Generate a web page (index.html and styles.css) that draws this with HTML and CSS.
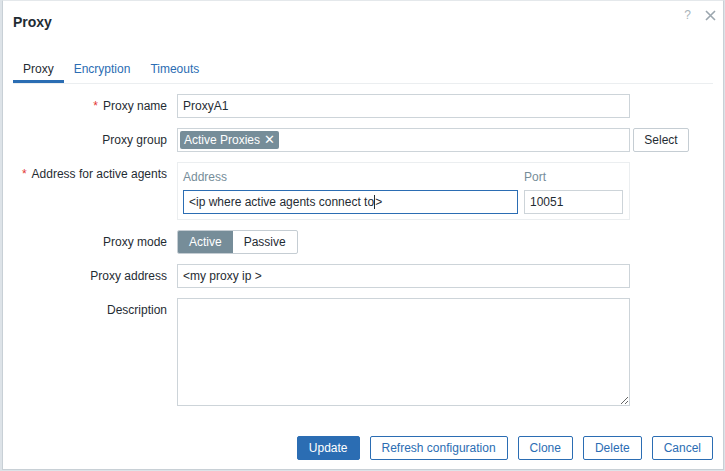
FILE: index.html
```html
<!DOCTYPE html>
<html lang="en">
<head>
  <meta charset="UTF-8">
  <meta name="viewport" content="width=device-width, initial-scale=1.0">
  <title>Proxy</title>
  <link rel="stylesheet" href="styles.css">
</head>
<body>
  <div class="dialog">
    <div class="dialog-header">
      <h1>Proxy</h1>
      <div class="header-controls">
        <span class="btn-help">?</span>
        <svg class="btn-close" width="11" height="11" viewBox="0 0 11 11">
          <path d="M1 1 L10 10 M10 1 L1 10" stroke="#9ba6ae" stroke-width="1.6" fill="none"/>
        </svg>
      </div>
    </div>

    <div class="dialog-body">
      <div class="tabs">
        <span class="tab tab-active">Proxy</span>
        <span class="tab">Encryption</span>
        <span class="tab">Timeouts</span>
      </div>

      <div class="form-grid">
        <label class="form-label required">Proxy name</label>
        <div class="form-field">
          <input type="text" class="text-input" value="ProxyA1">
        </div>

        <label class="form-label">Proxy group</label>
        <div class="form-field">
          <div class="multiselect">
            <span class="chip">Active Proxies <span class="chip-remove">✕</span></span>
          </div>
          <button class="button button-secondary">Select</button>
        </div>

        <label class="form-label required">Address for active agents</label>
        <div class="form-field">
          <div class="address-box">
            <div class="address-head">
              <span class="col-address">Address</span>
              <span class="col-port">Port</span>
            </div>
            <div class="address-row">
              <div class="text-input fake-input focused col-address">&lt;ip where active agents connect to<span class="caret"></span>&gt;</div>
              <input type="text" class="text-input col-port" value="10051">
            </div>
          </div>
        </div>

        <label class="form-label">Proxy mode</label>
        <div class="form-field">
          <div class="segmented">
            <span class="segment segment-on">Active</span>
            <span class="segment">Passive</span>
          </div>
        </div>

        <label class="form-label">Proxy address</label>
        <div class="form-field">
          <input type="text" class="text-input" value="<my proxy ip >">
        </div>

        <label class="form-label">Description</label>
        <div class="form-field">
          <textarea class="text-area"></textarea>
        </div>
      </div>
    </div>

    <div class="dialog-footer">
      <button class="button button-primary">Update</button>
      <button class="button button-outline">Refresh configuration</button>
      <button class="button button-outline">Clone</button>
      <button class="button button-outline">Delete</button>
      <button class="button button-outline">Cancel</button>
    </div>
  </div>
</body>
</html>
```

FILE: styles.css
```css
body {
  margin: 0;
  padding: 0;
  background-color: #dde3e8;
  font-family: "Liberation Sans", Arial, sans-serif;
  font-size: 12px;
  color: #1f2c33;
}

.dialog {
  box-sizing: border-box;
  width: 722px;
  height: 470px;
  margin-left: 2px;
  background-color: #fff;
  border: 1px solid #c8d0d6;
  border-top-color: #e4e8eb;
  display: flex;
  flex-direction: column;
}

.dialog-header {
  display: flex;
  align-items: flex-start;
  justify-content: space-between;
  padding: 13px 10px 14px;
}

.dialog-header h1 {
  margin: 0;
  font-size: 14px;
  line-height: 16px;
  font-weight: bold;
  color: #1f2c33;
}

.header-controls {
  display: flex;
  align-items: center;
  margin-top: -6px;
  margin-right: -3px;
}

.btn-help {
  font-size: 12px;
  line-height: 14px;
  color: #a9b3ba;
  margin-right: 14px;
}

.btn-close {
  display: block;
}

.dialog-body {
  flex: 1;
  padding: 10px 10px 0;
}

.tabs {
  display: flex;
  border-bottom: 1px solid #ebeef0;
}

.tab {
  padding: 8px 10px 4px;
  line-height: 14px;
  color: #2b6db3;
  border-bottom: 3px solid transparent;
}

.tab-active {
  color: #1f2c33;
  border-bottom-color: #2b6db3;
}

.form-grid {
  display: grid;
  grid-template-columns: 154px 1fr;
  column-gap: 10px;
  row-gap: 10px;
  margin-top: 10px;
}

.form-label {
  text-align: right;
  padding-top: 5px;
  line-height: 14px;
}

.required::before {
  content: '*';
  color: #e33734;
  margin-right: 5px;
}

.form-field {
  display: flex;
  align-items: flex-start;
}

.text-input {
  box-sizing: border-box;
  width: 453px;
  height: 24px;
  margin: 0;
  padding: 0 5px;
  border: 1px solid #cdd4d9;
  border-radius: 0;
  font-family: inherit;
  font-size: 12px;
  color: #1f2c33;
  background-color: #fff;
  outline: none;
}

.fake-input {
  display: flex;
  align-items: center;
  white-space: nowrap;
}

.focused {
  border-color: #2b6db3;
}

.caret {
  display: inline-block;
  width: 1px;
  height: 14px;
  background-color: #1f2c33;
}

.multiselect {
  box-sizing: border-box;
  width: 453px;
  height: 24px;
  padding: 2px;
  border: 1px solid #cdd4d9;
  display: flex;
  align-items: center;
}

.chip {
  display: inline-flex;
  align-items: center;
  height: 18px;
  padding: 0 4px;
  border-radius: 2px;
  background-color: #768d99;
  color: #fff;
  line-height: 14px;
}

.chip-remove {
  font-size: 13px;
  margin-left: 4px;
}

.button {
  box-sizing: border-box;
  height: 24px;
  margin: 0;
  padding: 0 11px;
  border: 1px solid #2b6db3;
  border-radius: 2px;
  background-color: #fff;
  font-family: inherit;
  font-size: 12px;
  color: #2b6db3;
  cursor: pointer;
}

.button-secondary {
  margin-left: 3px;
  width: 56px;
  padding: 0;
  border-color: #c5cdd3;
  color: #1f2c33;
}

.button-primary {
  background-color: #2b6db3;
  color: #fff;
}

.address-box {
  box-sizing: border-box;
  width: 453px;
  padding: 0 5px 5px;
  border: 1px solid #ebeef0;
}

.address-head {
  display: flex;
  padding: 7px 0 6px;
  line-height: 14px;
  color: #768d99;
}

.address-row {
  display: flex;
}

.col-address {
  width: 335px;
  margin-right: 6px;
}

.col-port {
  width: 99px;
}

.segmented {
  display: flex;
  height: 24px;
  border: 1px solid #c5cdd3;
  border-radius: 2px;
  box-sizing: border-box;
  overflow: hidden;
}

.segment {
  display: flex;
  align-items: center;
  padding: 0 11px;
  line-height: 14px;
}

.segment-on {
  background-color: #768d99;
  color: #fff;
}

.text-area {
  box-sizing: border-box;
  width: 453px;
  height: 108px;
  margin: 0;
  padding: 4px 5px;
  border: 1px solid #cdd4d9;
  border-radius: 0;
  font-family: inherit;
  font-size: 12px;
  outline: none;
}

.dialog-footer {
  display: flex;
  justify-content: flex-end;
  gap: 10px;
  padding: 0 10px 9px;
}
```
